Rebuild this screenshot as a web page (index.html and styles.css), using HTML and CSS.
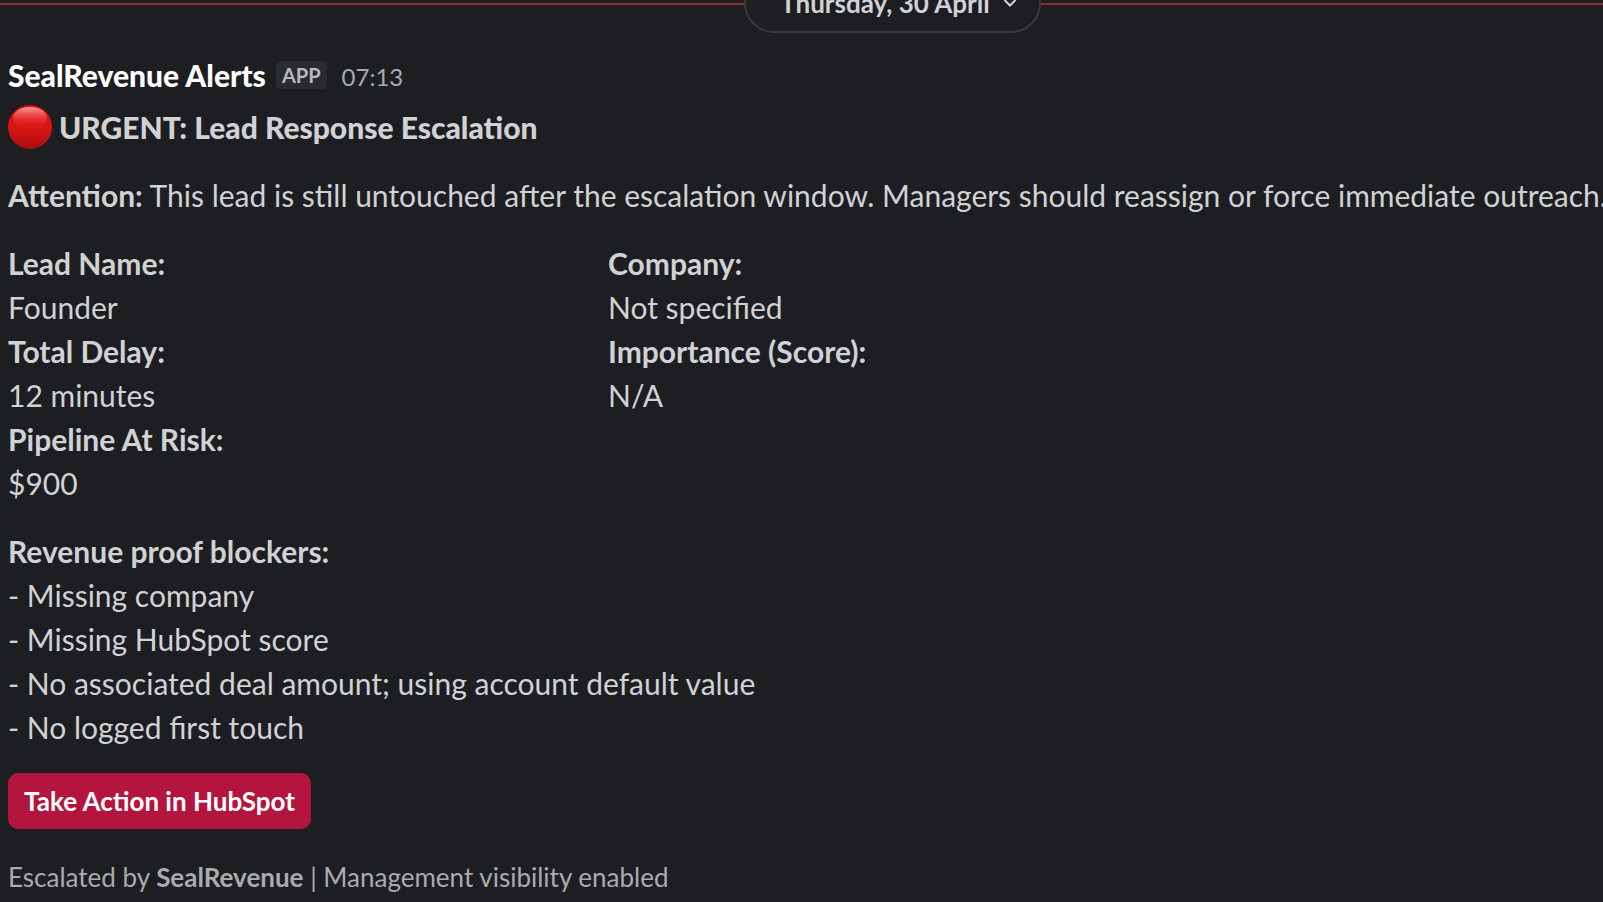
FILE: index.html
```
<!DOCTYPE html>
<html lang="en">
<head>
<meta charset="utf-8">
<title>SealRevenue Alerts</title>
<link rel="stylesheet" href="styles.css">
</head>
<body>
<main class="channel">
  <div class="day-divider">
    <button class="day-pill" type="button">Thursday, 30 April
      <svg class="chevron" viewBox="0 0 14 10" aria-hidden="true"><path d="M1.500 2l5.500 5.500 5.500-5.500"/></svg>
    </button>
  </div>
  <article class="message">
    <header class="sender">
      <span class="sender-name">SealRevenue Alerts</span>
      <span class="app-badge">APP</span>
      <time class="time">07:13</time>
    </header>
    <h1 class="title">
      <svg class="alert-dot" viewBox="0 0 44 44" aria-hidden="true">
        <defs>
          <linearGradient id="dot" x1="0" y1="0" x2="0" y2="1">
            <stop offset="0" stop-color="#d80f10"/><stop offset=".5" stop-color="#dc1414"/><stop offset="1" stop-color="#a80f10"/>
          </linearGradient>
          <linearGradient id="shine" x1="0" y1="0" x2="0" y2="1">
            <stop offset="0" stop-color="#ff9d96"/><stop offset="1" stop-color="#e01c1a" stop-opacity="0"/>
          </linearGradient>
        </defs>
        <circle cx="22" cy="22" r="22" fill="url(#dot)"/>
        <ellipse cx="22" cy="13" rx="17" ry="11" fill="url(#shine)"/>
      </svg>
      URGENT: Lead Response Escalation
    </h1>
    <p class="notice"><strong>Attention:</strong> This lead is still untouched after the escalation window. Managers should reassign or force immediate outreach.</p>
    <dl class="fields">
      <div><dt>Lead Name:</dt><dd>Founder</dd></div>
      <div><dt>Company:</dt><dd>Not specified</dd></div>
      <div><dt>Total Delay:</dt><dd>12 minutes</dd></div>
      <div><dt>Importance (Score):</dt><dd>N/A</dd></div>
      <div><dt>Pipeline At Risk:</dt><dd>$900</dd></div>
    </dl>
    <section class="blockers">
      <strong>Revenue proof blockers:</strong>
      <p>- Missing company</p>
      <p>- Missing HubSpot score</p>
      <p>- No associated deal amount; using account default value</p>
      <p>- No logged first touch</p>
    </section>
    <button class="action" type="button">Take Action in HubSpot</button>
    <footer class="context">Escalated by <strong>SealRevenue</strong> | Management visibility enabled</footer>
  </article>
</main>
</body>
</html>
```
FILE: styles.css
```
* { box-sizing: border-box; }
body {
  margin: 0;
  background: #1d1e22;
  color: #d1d2d3;
  font: 30px/44px Lato, sans-serif;
  overflow: hidden;
}
h1, p, dl, dd { margin: 0; }
strong, dt { font-weight: 700; }
.day-divider {
  display: flex;
  align-items: flex-end;
  justify-content: center;
  height: 33px;
  padding-left: 182px;
  background: linear-gradient(#823728, #823728) 0 3px / 100% 2px no-repeat;
}
.day-pill {
  display: flex;
  align-items: center;
  gap: 13px;
  height: 60px;
  padding: 0 22px 0 34px;
  border: 2px solid #37393d;
  border-radius: 30px;
  background: #1d1e22;
  color: #d1d2d3;
  font: 700 26px/32px Lato, sans-serif;
  white-space: nowrap;
}
.chevron { width: 14px; height: 10px; fill: none; stroke: currentColor; stroke-width: 2; }
.message { padding: 20px 8px 0; }
.sender { display: flex; align-items: center; gap: 10px; height: 44px; }
.sender-name { color: #fff; font-weight: 900; }
.app-badge {
  padding: 0 6px;
  border-radius: 4px;
  background: #2a2b2f;
  color: #b9babd;
  font-size: 20px;
  font-weight: 700;
  line-height: 28px;
}
.time { margin-left: 5px; padding-top: 4px; color: #ababad; font-size: 24px; }
.title { display: flex; align-items: center; gap: 7px; height: 60px; font-size: 30px; font-weight: 900; }
.alert-dot { width: 44px; height: 46px; }
.notice { margin-top: 16px; white-space: nowrap; }
.fields { display: grid; grid-template-columns: 600px 1fr; margin-top: 24px; }
.blockers { margin-top: 24px; }
.action {
  display: block;
  height: 56px;
  margin-top: 24px;
  padding: 0 16px;
  border: 0;
  border-radius: 10px;
  background: #b4153f;
  color: #fff;
  font: 700 26px/32px Lato, sans-serif;
}
.context { margin-top: 26px; color: #ababad; font-size: 26px; }
```
